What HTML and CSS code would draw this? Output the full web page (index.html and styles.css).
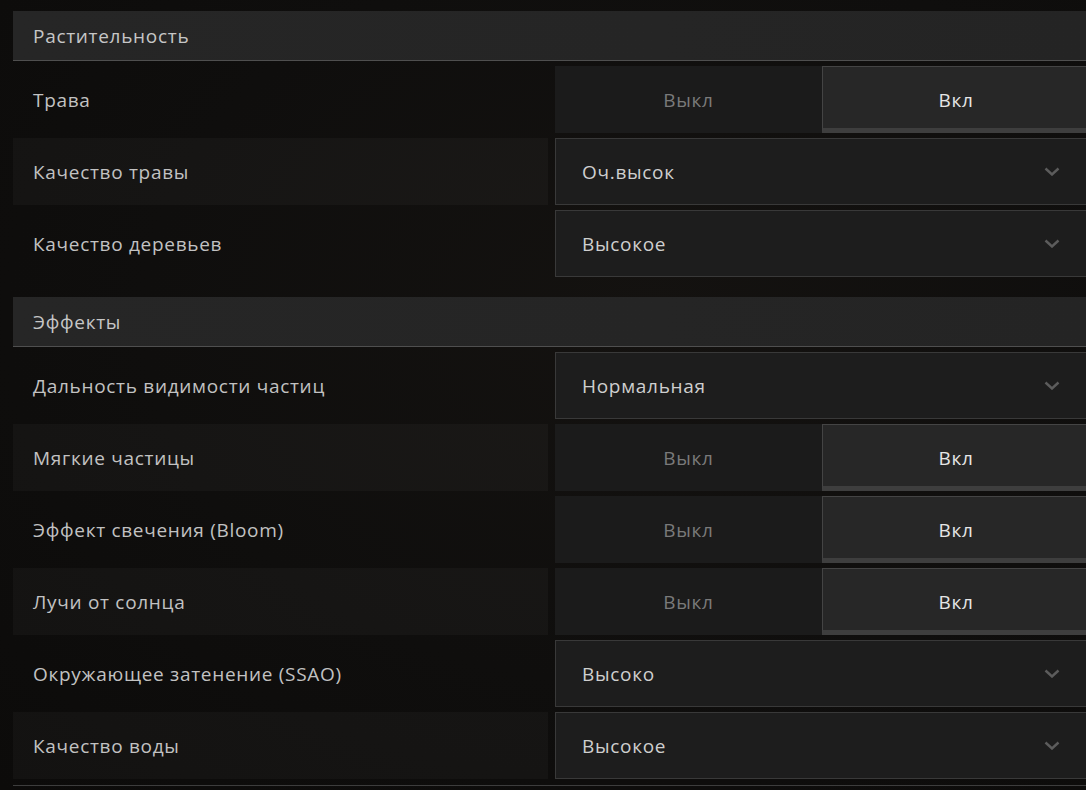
FILE: index.html
```html
<!DOCTYPE html>
<html lang="ru">
<head>
<meta charset="utf-8">
<link rel="stylesheet" href="styles.css">
</head>
<body>
<div class="panel">
  <section class="group">
    <div class="group-title">Растительность</div>
    <div class="row">
      <div class="label">Трава</div>
      <div class="toggle"><span class="opt">Выкл</span><span class="opt on">Вкл</span></div>
    </div>
    <div class="row alt">
      <div class="label">Качество травы</div>
      <div class="select"><span>Оч.высок</span><svg class="chev" viewBox="0 0 16 9"><path d="M1.5 1.5 L8 7.5 L14.5 1.5"/></svg></div>
    </div>
    <div class="row">
      <div class="label">Качество деревьев</div>
      <div class="select"><span>Высокое</span><svg class="chev" viewBox="0 0 16 9"><path d="M1.5 1.5 L8 7.5 L14.5 1.5"/></svg></div>
    </div>
  </section>
  <section class="group">
    <div class="group-title">Эффекты</div>
    <div class="row">
      <div class="label">Дальность видимости частиц</div>
      <div class="select"><span>Нормальная</span><svg class="chev" viewBox="0 0 16 9"><path d="M1.5 1.5 L8 7.5 L14.5 1.5"/></svg></div>
    </div>
    <div class="row alt">
      <div class="label">Мягкие частицы</div>
      <div class="toggle"><span class="opt">Выкл</span><span class="opt on">Вкл</span></div>
    </div>
    <div class="row">
      <div class="label">Эффект свечения (Bloom)</div>
      <div class="toggle"><span class="opt">Выкл</span><span class="opt on">Вкл</span></div>
    </div>
    <div class="row alt">
      <div class="label">Лучи от солнца</div>
      <div class="toggle"><span class="opt">Выкл</span><span class="opt on">Вкл</span></div>
    </div>
    <div class="row">
      <div class="label">Окружающее затенение (SSAO)</div>
      <div class="select"><span>Высоко</span><svg class="chev" viewBox="0 0 16 9"><path d="M1.5 1.5 L8 7.5 L14.5 1.5"/></svg></div>
    </div>
    <div class="row alt">
      <div class="label">Качество воды</div>
      <div class="select"><span>Высокое</span><svg class="chev" viewBox="0 0 16 9"><path d="M1.5 1.5 L8 7.5 L14.5 1.5"/></svg></div>
    </div>
    <div class="group-end"></div>
  </section>
</div>
</body>
</html>
```
FILE: styles.css
```css
html, body {
  margin: 0;
  padding: 0;
  width: 1086px;
  height: 790px;
  overflow: hidden;
}
body {
  background: radial-gradient(ellipse at 60% 40%, #141210 0%, #0f0e0d 55%, #0c0b0a 100%);
  font-family: "Open Sans", Roboto, sans-serif;
  font-size: 19px;
  letter-spacing: 0.7px;
  color: #c8c8c8;
}
.panel {
  width: 1076px;
  margin-left: 13px;
  padding-top: 11px;
  display: flex;
  flex-direction: column;
  gap: 20px;
}
.group {
  display: flex;
  flex-direction: column;
  gap: 5px;
}
.group-title {
  height: 49px;
  border-bottom: 1px solid #4f4f4f;
  background: linear-gradient(90deg, #262626 0%, #252525 60%, #242424 100%);
  display: flex;
  align-items: center;
  padding-left: 20px;
  color: #c6c6c6;
}
.row {
  height: 67px;
  display: grid;
  grid-template-columns: 535px 534px;
  column-gap: 7px;
}
.label {
  display: flex;
  align-items: center;
  padding-left: 20px;
  color: #c2c2c2;
}
.row.alt .label {
  background: rgba(255, 255, 255, 0.03);
}
.toggle {
  display: grid;
  grid-template-columns: 267px 267px;
}
.opt {
  display: flex;
  align-items: center;
  justify-content: center;
  background: #1b1b1b;
  color: #7a7a7a;
}
.opt.on {
  background: #272727;
  color: #e6e6e6;
  border-top: 1px solid #444;
  border-left: 1px solid #444;
  border-bottom: 5px solid #3e3e3e;
  box-sizing: border-box;
  padding-top: 4px;
}
.select {
  box-sizing: border-box;
  border: 1px solid #393939;
  background: #1d1d1d;
  display: flex;
  align-items: center;
  justify-content: space-between;
  padding-left: 26px;
  padding-right: 28px;
  color: #cfcfcf;
}
.chev {
  width: 16px;
  height: 9px;
  fill: none;
  stroke: #5c5c5c;
  stroke-width: 2.4;
}
.group-end {
  height: 1px;
  background: #3d3d3d;
  margin-top: 1px;
}
```
